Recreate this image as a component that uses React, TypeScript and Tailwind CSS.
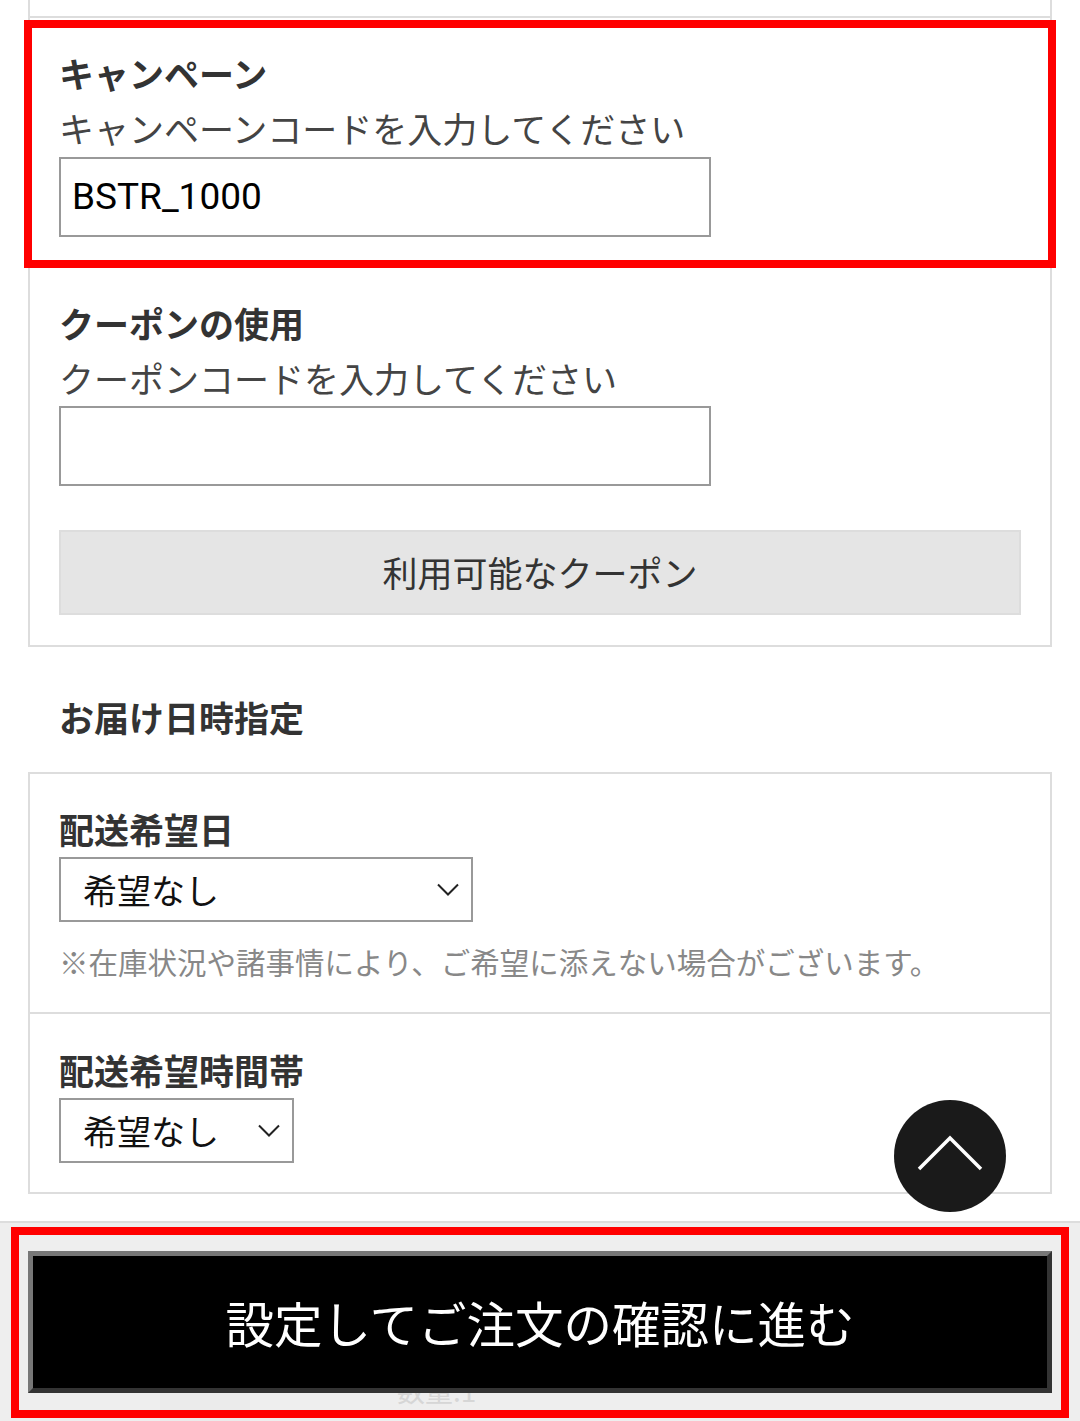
import React from "react";

const font = { fontFamily: '"Noto Sans CJK JP", "Noto Sans", sans-serif' };
const latin = { fontFamily: 'Roboto, "Noto Sans CJK JP", sans-serif' };

function Chevron({ className }: { className?: string }) {
  return (
    <svg width="22" height="14" viewBox="0 0 22 14" fill="none" aria-hidden="true" className={className}>
      <path d="M1 1.5l10 10 10-10" stroke="#222" strokeWidth="2" />
    </svg>
  );
}

function Select({ width }: { width: string }) {
  return (
    <div className={`mt-[3px] flex h-[65px] items-center justify-between border-2 border-[#999] bg-white pl-[22px] pr-[12px] ${width}`}>
      <span className="text-[34px] leading-none text-[#111]">希望なし</span>
      <Chevron />
    </div>
  );
}

export default function App() {
  return (
    <div className="relative h-[1421px] w-[1080px] overflow-hidden bg-white" style={font}>
      {/* coupon / campaign panel */}
      <div className="mx-[28px] border-x-2 border-b-2 border-[#ddd]">
        <div className="h-[18px] border-b-2 border-[#ddd]" />

        <div className="px-[29px] pt-[30px] pb-[61px]">
          <p className="text-[35px] font-bold leading-[50px] text-[#333]">キャンペーン</p>
          <p className="mt-[5px] text-[35px] leading-[50px] text-[#444]">キャンペーンコードを入力してください</p>
          <div className="mt-[4px] flex h-[80px] w-[652px] items-center border-2 border-[#999] px-[11px]">
            <span className="text-[37px] text-black" style={latin}>BSTR_1000</span>
          </div>
        </div>

        <div className="px-[29px] pb-[30px]">
          <p className="text-[35px] font-bold leading-[50px] text-[#333]">クーポンの使用</p>
          <p className="mt-[5px] text-[35px] leading-[50px] text-[#444]">クーポンコードを入力してください</p>
          <div className="mt-[3px] h-[80px] w-[652px] border-2 border-[#999]" />
          <button
            type="button"
            className="mt-[44px] flex h-[85px] w-full items-center justify-center border-2 border-[#ddd] bg-[#e5e5e5] text-[35px] text-[#333]"
          >
            利用可能なクーポン
          </button>
        </div>
      </div>

      <p className="mt-[45px] px-[59px] text-[35px] font-bold leading-[50px] text-[#333]">お届け日時指定</p>

      {/* delivery panel */}
      <div className="mx-[28px] mt-[30px] border-2 border-[#ddd]">
        <div className="px-[29px] pt-[30px] pb-[31px]">
          <p className="text-[35px] font-bold leading-[50px] text-[#333]">配送希望日</p>
          <Select width="w-[414px]" />
          <p className="mt-[19px] text-[29.5px] leading-[40px] text-[#888]">
            ※在庫状況や諸事情により、ご希望に添えない場合がございます。
          </p>
        </div>
        <div className="border-t-2 border-[#ddd] px-[29px] pt-[31px] pb-[29px]">
          <p className="text-[35px] font-bold leading-[50px] text-[#333]">配送希望時間帯</p>
          <Select width="w-[235px]" />
        </div>
      </div>

      {/* scroll to top */}
      <button
        type="button"
        aria-label="ページトップへ"
        className="absolute left-[894px] top-[1100px] flex h-[112px] w-[112px] items-center justify-center rounded-full bg-[#1a1a1a]"
      >
        <svg width="66" height="36" viewBox="0 0 66 36" fill="none" aria-hidden="true" className="-mt-[6px]">
          <path d="M2 34L33 3l31 31" stroke="#fff" strokeWidth="3.5" />
        </svg>
      </button>

      {/* fixed bottom bar */}
      <div className="absolute bottom-0 left-0 h-[200px] w-[1080px] border-t-2 border-[#ddd] bg-[#eeeeee]">
        <div className="absolute left-[160px] top-[150px] h-[60px] w-[90px] bg-[#ebebeb]" />
        <span className="absolute left-[397px] top-[146px] text-[28px] text-[#d6d6d6]">数量:1</span>
        <button
          type="button"
          className="absolute left-[28px] top-[28px] flex h-[142px] w-[1024px] items-center justify-center border-[5px] border-t-[#777] border-l-[#777] border-b-[#333] border-r-[#333] bg-black text-[48.5px] text-white"
        >
          設定してご注文の確認に進む
        </button>
      </div>

      {/* highlight frames */}
      <div className="pointer-events-none absolute left-[24px] top-[20px] h-[248px] w-[1032px] border-[8px] border-[#ff0000]" />
      <div className="pointer-events-none absolute left-[11px] top-[1227px] h-[191px] w-[1058px] border-[8px] border-[#ff0000]" />
    </div>
  );
}
